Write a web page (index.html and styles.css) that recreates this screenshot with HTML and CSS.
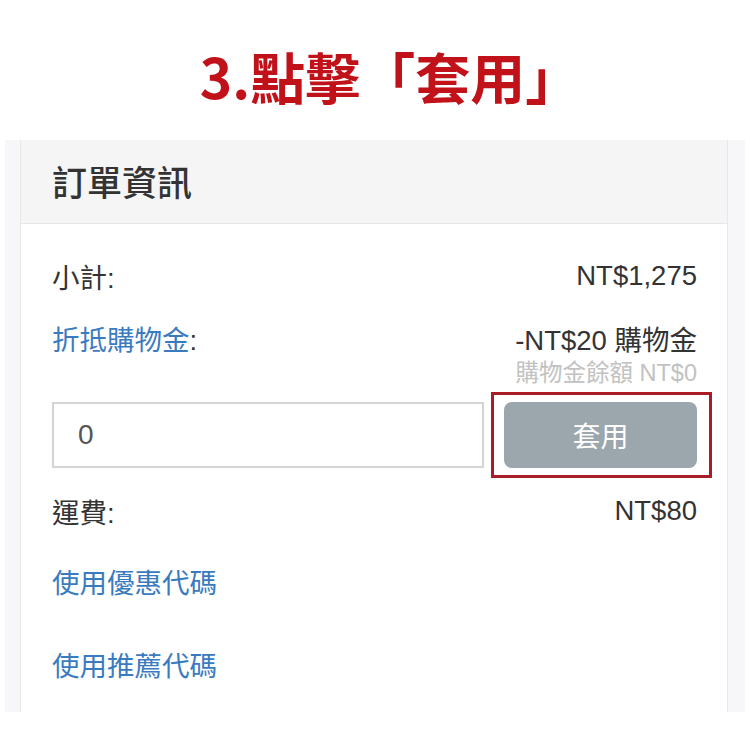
FILE: index.html
```html
<!DOCTYPE html>
<html lang="zh-Hant">
<head>
<meta charset="utf-8">
<link rel="stylesheet" href="styles.css">
</head>
<body>
<div class="title">3.點擊「套用」</div>
<div class="frame">
  <div class="card">
    <div class="card-header">訂單資訊</div>
    <div class="card-body">
      <div class="row r1"><span>小計:</span><span>NT$1,275</span></div>
      <div class="row r2"><span class="link">折抵購物金<span class="colon">:</span></span><span>-NT$20 購物金</span></div>
      <div class="sub">購物金餘額 NT$0</div>
      <div class="apply">
        <div class="input">0</div>
        <div class="btn-wrap">
          <div class="btn">套用</div>
          <div class="highlight"></div>
        </div>
      </div>
      <div class="row r3"><span>運費:</span><span>NT$80</span></div>
      <div class="link-row l1 link">使用優惠代碼</div>
      <div class="link-row l2 link">使用推薦代碼</div>
    </div>
  </div>
</div>
</body>
</html>
```
FILE: styles.css
```css
html, body {
  margin: 0;
  padding: 0;
  background: #ffffff;
}
body {
  width: 750px;
  height: 750px;
  font-family: "Liberation Sans", "Noto Sans CJK TC", sans-serif;
  color: #333333;
}
.title {
  height: 140px;
  display: flex;
  align-items: center;
  justify-content: center;
  padding-top: 10px;
  padding-left: 30px;
  box-sizing: border-box;
  font-family: "Noto Sans CJK TC", sans-serif;
  font-weight: 700;
  font-size: 55px;
  color: #c1121a;
}
.frame {
  margin: 0 5px;
  height: 572px;
  background: #f7f7f9;
  padding: 0 17px 0 15px;
  box-sizing: border-box;
}
.card {
  height: 100%;
  background: #ffffff;
  border-left: 1px solid #e8e8ea;
  border-right: 1px solid #e8e8ea;
}
.card-header {
  height: 84px;
  box-sizing: border-box;
  background: #f5f5f5;
  border-bottom: 1px solid #e6e6e6;
  display: flex;
  align-items: center;
  padding-left: 31px;
  padding-bottom: 2px;
  font-family: "Noto Sans CJK TC", sans-serif;
  font-size: 35px;
  font-weight: 500;
  color: #333333;
}
.card-body {
  padding: 32px 30px 0 31px;
}
.row {
  display: flex;
  justify-content: space-between;
  align-items: center;
  height: 40px;
  font-size: 27.5px;
}
.r2 { margin-top: 22px; }
.r3 { margin-top: 23px; }
.link { color: #3a7bbf; }
.colon { color: #333333; }
.sub {
  text-align: right;
  height: 30px;
  line-height: 30px;
  font-size: 23.5px;
  color: #c2c2c2;
}
.apply {
  display: flex;
  gap: 20px;
  margin-top: 14px;
  height: 66px;
}
.input {
  width: 432px;
  box-sizing: border-box;
  border: 2px solid #d4d4d4;
  display: flex;
  align-items: center;
  padding-left: 24px;
  font-size: 28px;
  color: #555555;
}
.btn-wrap {
  flex: 1;
  position: relative;
}
.btn {
  height: 100%;
  background: #9ba6ad;
  border-radius: 8px;
  display: flex;
  align-items: center;
  justify-content: center;
  color: #ffffff;
  font-size: 28px;
}
.highlight {
  position: absolute;
  left: -13px;
  right: -15px;
  top: -10px;
  bottom: -10px;
  border: 3px solid #a81d26;
}
.link-row {
  height: 40px;
  display: flex;
  align-items: center;
  font-size: 27.5px;
}
.l1 { margin-top: 30px; }
.l2 { margin-top: 43px; }
```
